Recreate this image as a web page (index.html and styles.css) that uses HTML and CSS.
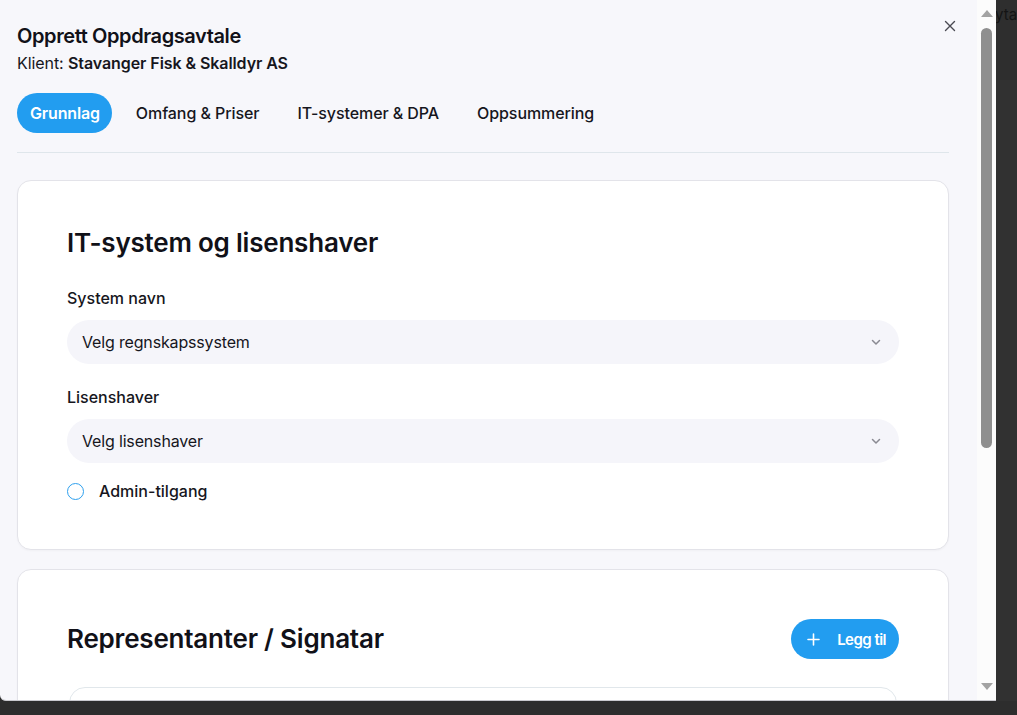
FILE: index.html
```html
<!DOCTYPE html>
<html lang="no">
<head>
<meta charset="utf-8">
<title>Opprett Oppdragsavtale</title>
<link rel="stylesheet" href="styles.css">
</head>
<body>
<div class="screen">
  <div class="dialog">
    <div class="dialog-body">
      <button class="close" aria-label="Lukk">
        <svg width="12" height="12" viewBox="0 0 12 12"><path d="M1.5 1.5 L10.5 10.5 M10.5 1.5 L1.5 10.5" stroke="#4a4a52" stroke-width="1.4" stroke-linecap="round"/></svg>
      </button>
      <h1 class="title">Opprett Oppdragsavtale</h1>
      <p class="client">Klient: <strong>Stavanger Fisk &amp; Skalldyr AS</strong></p>
      <nav class="tabs">
        <span class="tab active">Grunnlag</span>
        <span class="tab">Omfang &amp; Priser</span>
        <span class="tab">IT-systemer &amp; DPA</span>
        <span class="tab">Oppsummering</span>
      </nav>
      <div class="divider"></div>

      <section class="card">
        <h2 class="card-title">IT-system og lisenshaver</h2>
        <label class="field-label">System navn</label>
        <div class="select">
          <span>Velg regnskapssystem</span>
          <svg class="chev" width="12" height="12" viewBox="0 0 12 12"><path d="M2.5 4.5 L6 8 L9.5 4.5" fill="none" stroke="#8a8a92" stroke-width="1.5" stroke-linecap="round" stroke-linejoin="round"/></svg>
        </div>
        <label class="field-label second">Lisenshaver</label>
        <div class="select">
          <span>Velg lisenshaver</span>
          <svg class="chev" width="12" height="12" viewBox="0 0 12 12"><path d="M2.5 4.5 L6 8 L9.5 4.5" fill="none" stroke="#8a8a92" stroke-width="1.5" stroke-linecap="round" stroke-linejoin="round"/></svg>
        </div>
        <div class="radio-row">
          <span class="radio"></span>
          <span class="radio-label">Admin-tilgang</span>
        </div>
      </section>

      <section class="card card-reps">
        <div class="card-head">
          <h2 class="card-title">Representanter / Signatar</h2>
          <button class="add-btn">
            <svg width="13" height="13" viewBox="0 0 13 13"><path d="M6.5 1 V12 M1 6.5 H12" stroke="#fff" stroke-width="1.6" stroke-linecap="round"/></svg>
            <span>Legg til</span>
          </button>
        </div>
        <div class="rep-box"></div>
      </section>
    </div>
    <div class="scrollbar">
      <span class="arrow up"></span>
      <div class="track"><span class="thumb"></span></div>
      <span class="arrow down"></span>
    </div>
  </div>
  <div class="behind">
    <div class="behind-top">yta</div>
    <div class="behind-rest"></div>
  </div>
</div>
<div class="bottom-strip"></div>
</body>
</html>
```

FILE: styles.css
```css
* { box-sizing: border-box; }
html, body {
  margin: 0;
  padding: 0;
  height: 715px;
  overflow: hidden;
  background: #2d2d2d;
  font-family: Inter, "Noto Sans", sans-serif;
  color: #16161d;
}

.screen {
  display: flex;
  height: 701px;
}

.dialog {
  width: 996px;
  height: 701px;
  background: #f7f7fb;
  border-bottom: 1px solid #c9c9ce;
  border-bottom-left-radius: 6px;
  display: flex;
  overflow: hidden;
  position: relative;
}

.dialog-body {
  flex: 1;
  padding: 22px 28px 0 17px;
  position: relative;
  overflow: hidden;
}

.close {
  position: absolute;
  top: 20px;
  left: 944px;
  width: 12px;
  height: 12px;
  padding: 0;
  border: 0;
  background: none;
  display: flex;
}

.title {
  margin: 0;
  font-size: 20px;
  line-height: 28px;
  font-weight: 600;
  letter-spacing: -0.02em;
  color: #111118;
}

.client {
  margin: 2px 0 0;
  font-size: 16px;
  line-height: 22px;
  letter-spacing: -0.005em;
  color: #16161d;
}
.client strong { font-weight: 600; }

.tabs {
  display: flex;
  gap: 10px;
  margin-top: 19px;
}
.tab {
  height: 40px;
  padding: 0 14px;
  border-radius: 20px;
  display: flex;
  align-items: center;
  font-size: 16px;
  font-weight: 500;
  letter-spacing: -0.005em;
  color: #16161d;
}
.tab.active {
  background: #229df0;
  color: #fff;
  font-weight: 600;
  padding: 0 12px 0 13px;
  letter-spacing: -0.01em;
}

.divider {
  margin-top: 19px;
  height: 1px;
  background: #dfe6eb;
}

.card {
  margin-top: 27px;
  background: #fff;
  border: 1px solid #e3e3e9;
  border-radius: 14px;
  padding: 46px 49px 47px;
  box-shadow: 0 1px 2px rgba(0,0,0,0.03);
}

.card-title {
  margin: 0;
  font-size: 26px;
  line-height: 32px;
  font-weight: 600;
  letter-spacing: -0.008em;
  color: #111118;
}

.field-label {
  display: block;
  margin-top: 28px;
  font-size: 16px;
  line-height: 22px;
  font-weight: 500;
  color: #16161d;
}
.field-label.second { margin-top: 22px; }

.select {
  margin-top: 11px;
  height: 44px;
  border-radius: 22px;
  background: #f5f5fa;
  display: flex;
  align-items: center;
  justify-content: space-between;
  padding: 0 17px 0 15px;
  font-size: 16px;
  letter-spacing: -0.01em;
  color: #16161d;
}

.radio-row {
  margin-top: 17px;
  display: flex;
  align-items: center;
  gap: 15px;
  height: 22px;
}
.radio {
  width: 17px;
  height: 17px;
  border-radius: 50%;
  border: 1.5px solid #2ea0ee;
  background: #fff;
}
.radio-label {
  font-size: 16px;
  font-weight: 500;
  color: #16161d;
}

.card-reps {
  margin-top: 19px;
  padding-top: 49px;
}
.card-head {
  display: flex;
  align-items: center;
  justify-content: space-between;
  height: 40px;
}
.add-btn {
  height: 40px;
  border: 0;
  border-radius: 20px;
  background: #229df0;
  color: #fff;
  display: flex;
  align-items: center;
  gap: 17px;
  padding: 0 13px 0 16px;
  font-family: Inter, "Noto Sans", sans-serif;
  font-size: 15px;
  font-weight: 600;
  letter-spacing: -0.035em;
}
.rep-box {
  margin: 28px 2px 0;
  height: 80px;
  border: 1px solid #e1e7eb;
  border-radius: 16px;
}

.scrollbar {
  width: 19px;
  background: #fcfcfc;
  display: flex;
  flex-direction: column;
  align-items: center;
}
.arrow {
  width: 0;
  height: 0;
  border-left: 6px solid transparent;
  border-right: 6px solid transparent;
}
.arrow.up {
  margin-top: 10px;
  border-bottom: 7px solid #a3a3a3;
}
.arrow.down {
  margin-bottom: 10px;
  border-top: 7px solid #a3a3a3;
}
.track {
  flex: 1;
  width: 100%;
  display: flex;
  justify-content: center;
  padding-top: 11px;
}
.thumb {
  width: 11px;
  height: 420px;
  border-radius: 6px;
  background: #8f8f8f;
}

.behind {
  flex: 1;
  display: flex;
  flex-direction: column;
  overflow: hidden;
}
.behind-top {
  height: 80px;
  background: #2e2e2e;
  color: #141414;
  font-size: 15px;
  line-height: 30px;
  text-indent: -1px;
  white-space: nowrap;
}
.behind-rest {
  flex: 1;
  background: #313131;
}

.bottom-strip {
  height: 14px;
  background: #2d2d2d;
}
```
